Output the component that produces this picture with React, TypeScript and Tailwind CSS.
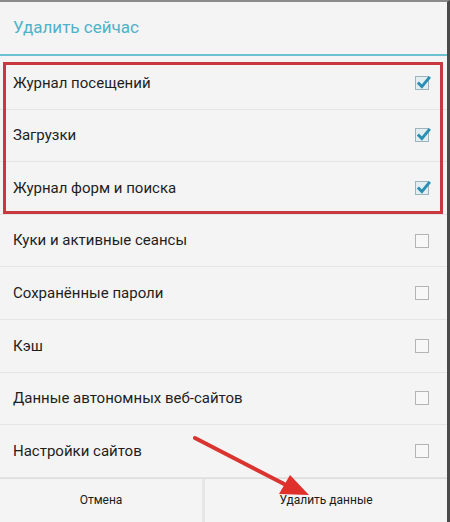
import React from "react";

type Item = { label: string; checked: boolean };

const items: Item[] = [
  { label: "Журнал посещений", checked: true },
  { label: "Загрузки", checked: true },
  { label: "Журнал форм и поиска", checked: true },
  { label: "Куки и активные сеансы", checked: false },
  { label: "Сохранённые пароли", checked: false },
  { label: "Кэш", checked: false },
  { label: "Данные автономных веб-сайтов", checked: false },
  { label: "Настройки сайтов", checked: false },
];

function Box({ checked }: { checked: boolean }) {
  return (
    <div
      className={`w-[14px] h-[14px] border relative ${
        checked ? "border-[#9fb3bd] bg-[#e3eef3]" : "border-[#b4b4b4] bg-[#f7f7f7]"
      }`}
    >
      {checked && (
        <svg viewBox="0 0 14 14" className="absolute -top-[3px] -left-[1px] w-[16px] h-[16px]">
          <path d="M2.5 7.5 L6 11 L13 2.5" fill="none" stroke="#2b8fb3" strokeWidth="2.6" />
        </svg>
      )}
    </div>
  );
}

export default function App() {
  return (
    <div
      className="w-[450px] h-[522px] bg-[#f4f4f4] relative overflow-hidden border-t-[2px] border-t-[#8a8a8a] border-r-[3px] border-r-[#4a4a4a] flex flex-col"
      style={{ fontFamily: "Roboto, 'Noto Sans', sans-serif" }}
    >
      <div className="h-[52px] shrink-0 flex items-center pl-[13px] text-[17px] text-[#4fb2c8]">
        Удалить сейчас
      </div>
      <div className="h-[2px] shrink-0 bg-[#6cc0d2]" />
      <div className="flex flex-col pt-[1px] shrink-0">
        {items.map((it) => (
          <div
            key={it.label}
            className="h-[52.6px] border-b border-[#e4e4e4] flex items-center justify-between pl-[13px] pr-[18px] text-[15px] text-[#1e1e1e]"
          >
            <span>{it.label}</span>
            <Box checked={it.checked} />
          </div>
        ))}
      </div>
      <div className="flex-1 flex text-[12px] text-[#1a1a1a] border-t border-[#dedede]">
        <div className="w-[202px] flex items-center justify-center">Отмена</div>
        <div className="w-[3px] bg-[#e6e6e6]" />
        <div className="flex-1 flex items-center justify-center">Удалить данные</div>
      </div>

      <div className="absolute left-[3px] top-[60px] w-[440px] h-[152px] border-[3px] border-[#c8383e] pointer-events-none" />

      <svg className="absolute left-0 top-0 pointer-events-none" width="450" height="522">
        <line x1="195" y1="436" x2="288" y2="484" stroke="#d9342f" strokeWidth="4" strokeLinecap="round" />
        <polygon points="309,493 279,492 290,473" fill="#e0302c" />
      </svg>
    </div>
  );
}
